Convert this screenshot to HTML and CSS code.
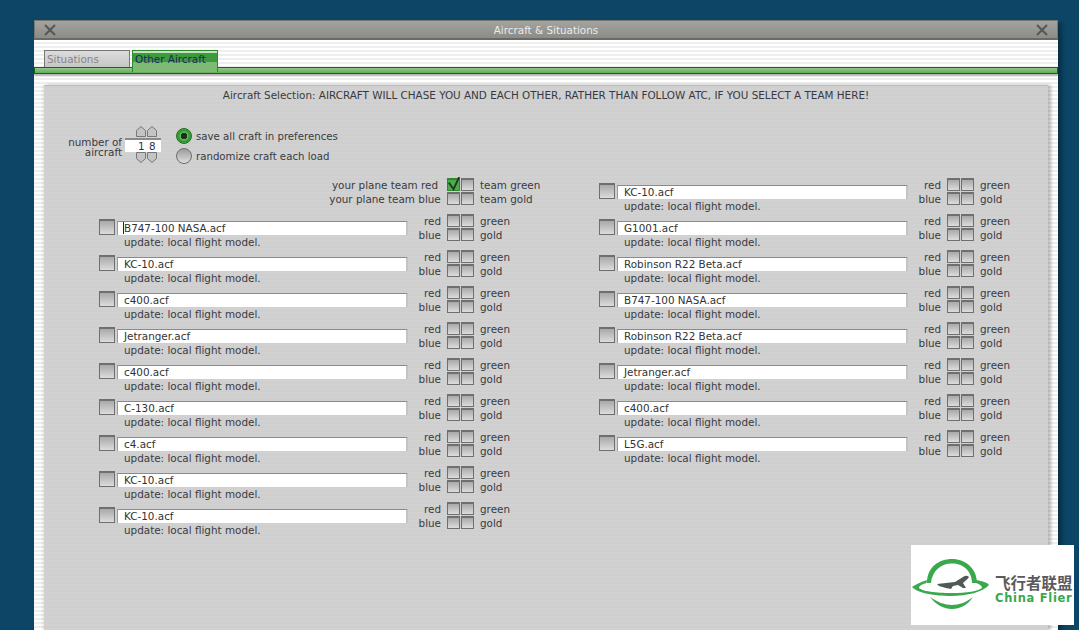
FILE: index.html
```html
<!DOCTYPE html>
<html lang="en">
<head>
  <meta charset="UTF-8" />
  <meta name="viewport" content="width=device-width, initial-scale=1.0" />
  <title>Aircraft &amp; Situations</title>
  <link rel="stylesheet" href="styles.css">
</head>
<body>
  <div class="window">
    <div class="titlebar">
      <svg class="close" viewBox="0 0 12 12"><path d="M1 1 L11 11 M11 1 L1 11" /></svg>
      <span class="title">Aircraft &amp; Situations</span>
      <svg class="close" viewBox="0 0 12 12"><path d="M1 1 L11 11 M11 1 L1 11" /></svg>
    </div>

    <div class="tabs">
      <div class="tab">Situations</div>
      <div class="tab tab-active">Other Aircraft</div>
    </div>
    <div class="tab-bar"></div>

    <div class="panel">
      <h1 class="panel-title">Aircraft Selection: AIRCRAFT WILL CHASE YOU AND EACH OTHER, RATHER THAN FOLLOW ATC, IF YOU SELECT A TEAM HERE!</h1>

      <div class="options">
        <div class="count-label">number of<br>aircraft</div>
        <div class="spinner">
          <div class="arrows">
            <svg viewBox="0 0 10 11"><path d="M0.5 10.5 V4.5 L5 0.5 L9.5 4.5 V10.5 Z" /></svg>
            <svg viewBox="0 0 10 11"><path d="M0.5 10.5 V4.5 L5 0.5 L9.5 4.5 V10.5 Z" /></svg>
          </div>
          <div class="count">1 8</div>
          <div class="arrows">
            <svg viewBox="0 0 10 11"><path d="M0.5 0.5 V6.5 L5 10.5 L9.5 6.5 V0.5 Z" /></svg>
            <svg viewBox="0 0 10 11"><path d="M0.5 0.5 V6.5 L5 10.5 L9.5 6.5 V0.5 Z" /></svg>
          </div>
        </div>
        <div class="radios">
          <div class="radio-row"><span class="radio radio-on"></span>save all craft in preferences</div>
          <div class="radio-row"><span class="radio"></span>randomize craft each load</div>
        </div>
      </div>

      <div class="columns">
        <div class="column">
          <div class="team team-plane">
            <span class="team-l">your plane team red</span>
            <span class="box box-on"><svg class="tick" viewBox="0 0 16 16"><path d="M2 6 L7 13 L13 0" /></svg></span><span class="box"></span>
            <span class="team-r">team green</span>
            <span class="team-l">your plane team blue</span>
            <span class="box"></span><span class="box"></span>
            <span class="team-r">team gold</span>
          </div>

          <div class="craft">
            <span class="check"></span>
            <div class="info"><div class="field"><span class="caret">B747-100 NASA.acf</span></div><div class="note">update: local flight model.</div></div>
            <div class="team"><span class="team-l">red</span><span class="box"></span><span class="box"></span><span class="team-r">green</span><span class="team-l">blue</span><span class="box"></span><span class="box"></span><span class="team-r">gold</span></div>
          </div>
          <div class="craft">
            <span class="check"></span>
            <div class="info"><div class="field">KC-10.acf</div><div class="note">update: local flight model.</div></div>
            <div class="team"><span class="team-l">red</span><span class="box"></span><span class="box"></span><span class="team-r">green</span><span class="team-l">blue</span><span class="box"></span><span class="box"></span><span class="team-r">gold</span></div>
          </div>
          <div class="craft">
            <span class="check"></span>
            <div class="info"><div class="field">c400.acf</div><div class="note">update: local flight model.</div></div>
            <div class="team"><span class="team-l">red</span><span class="box"></span><span class="box"></span><span class="team-r">green</span><span class="team-l">blue</span><span class="box"></span><span class="box"></span><span class="team-r">gold</span></div>
          </div>
          <div class="craft">
            <span class="check"></span>
            <div class="info"><div class="field">Jetranger.acf</div><div class="note">update: local flight model.</div></div>
            <div class="team"><span class="team-l">red</span><span class="box"></span><span class="box"></span><span class="team-r">green</span><span class="team-l">blue</span><span class="box"></span><span class="box"></span><span class="team-r">gold</span></div>
          </div>
          <div class="craft">
            <span class="check"></span>
            <div class="info"><div class="field">c400.acf</div><div class="note">update: local flight model.</div></div>
            <div class="team"><span class="team-l">red</span><span class="box"></span><span class="box"></span><span class="team-r">green</span><span class="team-l">blue</span><span class="box"></span><span class="box"></span><span class="team-r">gold</span></div>
          </div>
          <div class="craft">
            <span class="check"></span>
            <div class="info"><div class="field">C-130.acf</div><div class="note">update: local flight model.</div></div>
            <div class="team"><span class="team-l">red</span><span class="box"></span><span class="box"></span><span class="team-r">green</span><span class="team-l">blue</span><span class="box"></span><span class="box"></span><span class="team-r">gold</span></div>
          </div>
          <div class="craft">
            <span class="check"></span>
            <div class="info"><div class="field">c4.acf</div><div class="note">update: local flight model.</div></div>
            <div class="team"><span class="team-l">red</span><span class="box"></span><span class="box"></span><span class="team-r">green</span><span class="team-l">blue</span><span class="box"></span><span class="box"></span><span class="team-r">gold</span></div>
          </div>
          <div class="craft">
            <span class="check"></span>
            <div class="info"><div class="field">KC-10.acf</div><div class="note">update: local flight model.</div></div>
            <div class="team"><span class="team-l">red</span><span class="box"></span><span class="box"></span><span class="team-r">green</span><span class="team-l">blue</span><span class="box"></span><span class="box"></span><span class="team-r">gold</span></div>
          </div>
          <div class="craft">
            <span class="check"></span>
            <div class="info"><div class="field">KC-10.acf</div><div class="note">update: local flight model.</div></div>
            <div class="team"><span class="team-l">red</span><span class="box"></span><span class="box"></span><span class="team-r">green</span><span class="team-l">blue</span><span class="box"></span><span class="box"></span><span class="team-r">gold</span></div>
          </div>
        </div>

        <div class="column">
          <div class="craft">
            <span class="check"></span>
            <div class="info"><div class="field">KC-10.acf</div><div class="note">update: local flight model.</div></div>
            <div class="team"><span class="team-l">red</span><span class="box"></span><span class="box"></span><span class="team-r">green</span><span class="team-l">blue</span><span class="box"></span><span class="box"></span><span class="team-r">gold</span></div>
          </div>
          <div class="craft">
            <span class="check"></span>
            <div class="info"><div class="field">G1001.acf</div><div class="note">update: local flight model.</div></div>
            <div class="team"><span class="team-l">red</span><span class="box"></span><span class="box"></span><span class="team-r">green</span><span class="team-l">blue</span><span class="box"></span><span class="box"></span><span class="team-r">gold</span></div>
          </div>
          <div class="craft">
            <span class="check"></span>
            <div class="info"><div class="field">Robinson R22 Beta.acf</div><div class="note">update: local flight model.</div></div>
            <div class="team"><span class="team-l">red</span><span class="box"></span><span class="box"></span><span class="team-r">green</span><span class="team-l">blue</span><span class="box"></span><span class="box"></span><span class="team-r">gold</span></div>
          </div>
          <div class="craft">
            <span class="check"></span>
            <div class="info"><div class="field">B747-100 NASA.acf</div><div class="note">update: local flight model.</div></div>
            <div class="team"><span class="team-l">red</span><span class="box"></span><span class="box"></span><span class="team-r">green</span><span class="team-l">blue</span><span class="box"></span><span class="box"></span><span class="team-r">gold</span></div>
          </div>
          <div class="craft">
            <span class="check"></span>
            <div class="info"><div class="field">Robinson R22 Beta.acf</div><div class="note">update: local flight model.</div></div>
            <div class="team"><span class="team-l">red</span><span class="box"></span><span class="box"></span><span class="team-r">green</span><span class="team-l">blue</span><span class="box"></span><span class="box"></span><span class="team-r">gold</span></div>
          </div>
          <div class="craft">
            <span class="check"></span>
            <div class="info"><div class="field">Jetranger.acf</div><div class="note">update: local flight model.</div></div>
            <div class="team"><span class="team-l">red</span><span class="box"></span><span class="box"></span><span class="team-r">green</span><span class="team-l">blue</span><span class="box"></span><span class="box"></span><span class="team-r">gold</span></div>
          </div>
          <div class="craft">
            <span class="check"></span>
            <div class="info"><div class="field">c400.acf</div><div class="note">update: local flight model.</div></div>
            <div class="team"><span class="team-l">red</span><span class="box"></span><span class="box"></span><span class="team-r">green</span><span class="team-l">blue</span><span class="box"></span><span class="box"></span><span class="team-r">gold</span></div>
          </div>
          <div class="craft">
            <span class="check"></span>
            <div class="info"><div class="field">L5G.acf</div><div class="note">update: local flight model.</div></div>
            <div class="team"><span class="team-l">red</span><span class="box"></span><span class="box"></span><span class="team-r">green</span><span class="team-l">blue</span><span class="box"></span><span class="box"></span><span class="team-r">gold</span></div>
          </div>
        </div>
      </div>
    </div>
  </div>

  <!-- watermark sits over the window -->
  <div class="watermark">
    <svg class="watermark-logo" viewBox="0 0 82 80">
      <path class="wm-green" d="M16 38 C16 22 28 14 41 14 C55 14 66 24 66 38 L61 38 C61 26 52 18.5 41 18.5 C30 18.5 21 26 20 38 Z" />
      <path class="wm-green" d="M1 42 C5 39 10 37 16 35 L15.5 38 C11 39 8 41 8 43 C12 47 30 48 41 48 C55 48 68 46 71 43 C71 41 69 39 65 38 L65 35 C72 36 77 38 78 40 C72 47 56 51 40 51 C24 51 6 48 1 42 Z" />
      <path class="wm-green" d="M19 52 C25 60 33 64 41 64 C49 64 57 60 62 52 C56 57 48 60 41 60 C34 60 26 57 19 52 Z" />
      <path class="wm-gray" d="M26 39 L44 37 L52 32 C54 31 56 30 58 32 C57 34 54 36 52 38 L55 43 L52 43 L47 40 L42 41 L40 44 L35 43 L28 41 Z" />
    </svg>
    <div class="watermark-text">
      <div class="wm-cn">飞行者联盟</div>
      <div class="wm-en">China Flier</div>
    </div>
  </div>
</body>
</html>
```

FILE: styles.css
```css
* {
  margin: 0;
  padding: 0;
  box-sizing: border-box;
}

html, body {
  height: 630px;
  overflow: hidden;
}

body {
  font-family: "DejaVu Sans", sans-serif;
  font-size: 10.4px;
  color: #3a3a3e;
  background: #0c4566;
  padding: 20px 21px 0 34px;
  position: relative;
}

.window {
  height: 610px;
  display: flex;
  flex-direction: column;
  background: repeating-linear-gradient(180deg, #ffffff 0, #ffffff 2px, #eeeeee 2px, #eeeeee 4px);
  box-shadow: 4px 3px 4px rgba(0, 0, 0, 0.3);
}

/* Title bar */
.titlebar {
  height: 20px;
  flex: none;
  display: flex;
  align-items: center;
  justify-content: space-between;
  padding: 0 9px;
  background: linear-gradient(180deg, #a3a39f 0%, #8b8b87 100%);
  border: 1px solid #77776f;
  border-bottom: 2px solid #6b6b66;
}

.title {
  color: #ececec;
}

.close {
  width: 12px;
  height: 12px;
  fill: none;
  stroke: #56565a;
  stroke-width: 2;
}

/* Tabs */
.tabs {
  display: flex;
  gap: 2px;
  padding: 10px 0 0 10px;
  height: 27px;
  flex: none;
  position: relative;
  z-index: 1;
}

.tab {
  width: 86px;
  height: 17px;
  padding: 2px 0 0 2px;
  color: #85858a;
  background: linear-gradient(180deg, #dcdcdc 0%, #c6c6c6 100%);
  border: 1px solid #77777a;
  border-bottom: none;
}

.tab-active {
  height: 22px;
  color: #1a2a5a;
  background: linear-gradient(180deg, #c3e0bf 0, #c3e0bf 2px, #3d9a3d 2px, #3d9a3d 11px, #7dbb75 11px, #7dbb75 100%);
  border: 1px solid #2c8a2c;
  border-bottom: none;
}

.tab-bar {
  height: 7px;
  flex: none;
  background: linear-gradient(180deg, #8fca87 0%, #62ad5b 100%);
  border: 1px solid #0f6a12;
  box-shadow: 0 2px 2px rgba(0, 0, 0, 0.25);
}

/* Main panel */
.panel {
  flex: 1;
  margin: 11px 10px 0;
  padding-top: 3px;
  background: repeating-linear-gradient(180deg, #cfcfcf 0, #cfcfcf 2px, #d1d1d1 2px, #d1d1d1 4px);
  border-top: 1px solid #bcbcbc;
  box-shadow: 3px 0 3px rgba(0, 0, 0, 0.25), -2px 0 2px rgba(0, 0, 0, 0.08);
}

.panel-title {
  font-size: 10.4px;
  font-weight: normal;
  text-align: center;
  line-height: 12px;
}

/* Aircraft count and radios */
.options {
  display: flex;
  align-items: flex-start;
  height: 52px;
  margin-top: 25px;
  padding-left: 24px;
}

.count-label {
  width: 54px;
  margin-top: 11px;
  text-align: right;
  line-height: 10px;
  white-space: nowrap;
}

.spinner {
  width: 36px;
  margin-left: 3px;
}

.arrows {
  display: flex;
  gap: 1px;
  height: 11px;
  padding-left: 11px;
}

.arrows svg {
  width: 10px;
  height: 11px;
  flex: none;
  fill: #c4c4c4;
  stroke: #77777a;
}

.count {
  height: 14px;
  margin-top: 1px;
  padding-right: 5px;
  text-align: right;
  line-height: 12px;
  letter-spacing: 0.5px;
  color: #333;
  background: #fff;
  border-top: 2px solid #8a8a8a;
}

.radios {
  margin-left: 15px;
  font-size: 10.2px;
}

.radio-row {
  display: flex;
  align-items: center;
  gap: 4px;
  height: 20px;
}

.radio {
  width: 16px;
  height: 16px;
  border-radius: 50%;
  border: 1px solid #6d6d6d;
  background: linear-gradient(180deg, #9c9c9c 0%, #dedede 100%);
}

.radio-on {
  border-color: #1d6e1d;
  background: radial-gradient(circle, #1f2f1f 0, #1f2f1f 3px, #5cc05c 3.5px, #2c8d2c 6px, #7ccf7c 8px);
}

/* Aircraft columns */
.columns {
  display: flex;
  padding-left: 55px;
}

.column {
  width: 500px;
  flex: none;
}

.craft {
  display: flex;
  align-items: flex-start;
  height: 36px;
}

.check {
  width: 16px;
  height: 16px;
  margin-top: 5px;
  flex: none;
  border: 1px solid #6f6f6f;
  border-top: 2px solid #6f6f6f;
  background: linear-gradient(180deg, #a9a9a9 0%, #dcdcdc 100%);
}

.info {
  width: 291px;
  margin: 7px 0 0 2px;
  flex: none;
}

.field {
  height: 14px;
  padding-left: 6px;
  line-height: 13px;
  color: #333;
  background: #fff;
  border-top: 1px solid #8a8a8a;
  border-left: 1px solid #9a9a9a;
  border-right: 2px solid #c4c4c4;
}

.caret {
  border-left: 1px solid #222;
  margin-left: -1px;
}

.note {
  padding-left: 7px;
  line-height: 14px;
}

/* Team picker: label, two boxes, label, twice */
.team {
  display: grid;
  grid-template-columns: 39px 14px 14px auto;
  grid-auto-rows: 14px;
  line-height: 14px;
}

.team-plane {
  grid-template-columns: 118px 14px 14px auto;
  height: 36px;
  margin-left: 230px;
}

.team-l {
  padding-right: 6px;
  text-align: right;
  white-space: nowrap;
}

.team-plane .team-l {
  text-align: center;
}

.team-r {
  padding-left: 5px;
  white-space: nowrap;
}

.box {
  width: 13px;
  height: 13px;
  position: relative;
  border: 1px solid #6f6f6f;
  border-top: 2px solid #6f6f6f;
  background: linear-gradient(180deg, #a9a9a9 0%, #dcdcdc 100%);
}

.box-on {
  border-color: #2c8a2c;
  background: #4fa94f;
}

.tick {
  position: absolute;
  left: -1px;
  top: -3px;
  width: 15px;
  height: 15px;
  fill: none;
  stroke: #1f3a1f;
  stroke-width: 2;
}

/* Watermark */
.watermark {
  position: absolute;
  left: 911px;
  top: 545px;
  width: 163px;
  height: 80px;
  display: flex;
  background: #fff;
  overflow: hidden;
}

.watermark-logo {
  width: 82px;
  height: 80px;
  flex: none;
}

.wm-green {
  fill: #3aa84c;
}

.wm-gray {
  fill: #4f5a58;
}

.watermark-text {
  margin: 28px 0 0 2px;
  white-space: nowrap;
}

.wm-cn {
  font-family: "Noto Sans CJK SC", sans-serif;
  font-size: 15.5px;
  font-weight: 700;
  line-height: 18px;
  color: #5a5a5e;
}

.wm-en {
  font-family: "DejaVu Sans", sans-serif;
  font-size: 11.5px;
  font-weight: 700;
  line-height: 11px;
  margin-top: 2px;
  letter-spacing: 0.7px;
  color: #3aa84c;
}
```
